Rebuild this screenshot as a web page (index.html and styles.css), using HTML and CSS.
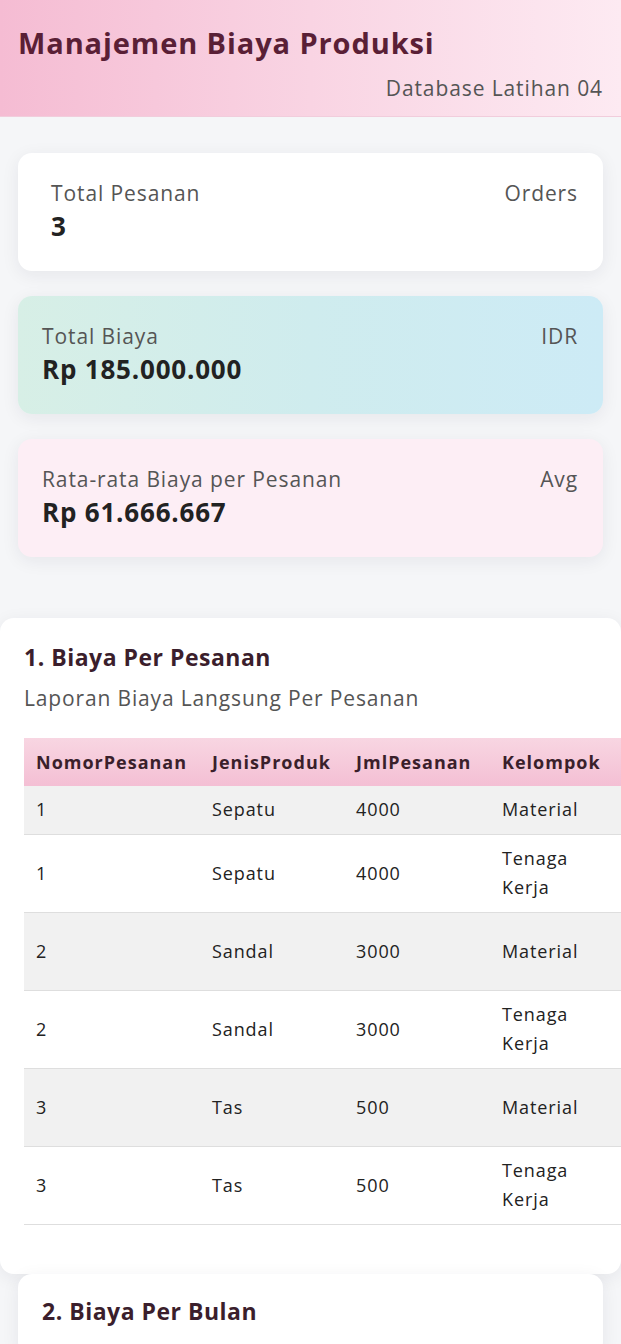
FILE: index.html
```html
<!DOCTYPE html>
<html lang="id">
<head>
<meta charset="utf-8">
<title>Manajemen Biaya Produksi</title>
<link rel="stylesheet" href="styles.css">
</head>
<body>
<header class="topbar">
  <h1 class="title">Manajemen Biaya Produksi</h1>
  <div class="db">Database Latihan 04</div>
</header>

<main class="main">
  <section class="stats">
    <div class="stat stat-white">
      <div class="stat-row"><span class="stat-label">Total Pesanan</span><span class="stat-tag">Orders</span></div>
      <div class="stat-value">3</div>
    </div>
    <div class="stat stat-mint">
      <div class="stat-row"><span class="stat-label">Total Biaya</span><span class="stat-tag">IDR</span></div>
      <div class="stat-value">Rp 185.000.000</div>
    </div>
    <div class="stat stat-pink">
      <div class="stat-row"><span class="stat-label">Rata-rata Biaya per Pesanan</span><span class="stat-tag">Avg</span></div>
      <div class="stat-value">Rp 61.666.667</div>
    </div>
  </section>

  <section class="panel panel-wide">
    <h2 class="panel-title">1. Biaya Per Pesanan</h2>
    <p class="panel-sub">Laporan Biaya Langsung Per Pesanan</p>
    <table class="grid">
      <colgroup>
        <col class="c1"><col class="c2"><col class="c3"><col class="c4"><col class="c5"><col class="c6">
      </colgroup>
      <thead>
        <tr><th>NomorPesanan</th><th>JenisProduk</th><th>JmlPesanan</th><th>Kelompok</th><th>Keterangan</th><th>Jumlah</th></tr>
      </thead>
      <tbody>
        <tr><td>1</td><td>Sepatu</td><td>4000</td><td>Material</td><td class="nw">Bahan kulit</td><td class="nw">Rp 40.000.000</td></tr>
        <tr><td>1</td><td>Sepatu</td><td>4000</td><td>Tenaga Kerja</td><td class="nw">Upah jahit</td><td class="nw">Rp 30.000.000</td></tr>
        <tr><td>2</td><td>Sandal</td><td>3000</td><td>Material</td><td class="nw">Bahan karet<br>sintetis</td><td class="nw">Rp 36.000.000</td></tr>
        <tr><td>2</td><td>Sandal</td><td>3000</td><td>Tenaga Kerja</td><td class="nw">Upah cetak</td><td class="nw">Rp 24.000.000</td></tr>
        <tr><td>3</td><td>Tas</td><td>500</td><td>Material</td><td class="nw">Bahan kanvas<br>dan resleting</td><td class="nw">Rp 35.000.000</td></tr>
        <tr><td>3</td><td>Tas</td><td>500</td><td>Tenaga Kerja</td><td class="nw">Upah jahit</td><td class="nw">Rp 20.000.000</td></tr>
      </tbody>
    </table>
  </section>

  <section class="panel panel-card">
    <h2 class="panel-title">2. Biaya Per Bulan</h2>
  </section>
</main>
</body>
</html>
```

FILE: styles.css
```css
* { box-sizing: border-box; }
html, body { margin: 0; padding: 0; }
body {
  background: #f5f6f8;
  font-family: "Open Sans", "Noto Sans", sans-serif;
  color: #222;
  overflow-x: hidden;
}
.topbar {
  height: 117px;
  padding: 24px 18px 0 18px;
  background: linear-gradient(90deg, #f5bcd3 0%, #f9d4e3 50%, #fdeaf2 100%);
  border-bottom: 1px solid #f1cddc;
}
.title {
  margin: 0;
  font-size: 29px;
  line-height: 38px;
  font-weight: 700;
  color: #5a1f36;
  letter-spacing: 0.9px;
}
.db {
  margin-top: 13px;
  text-align: right;
  font-size: 21px;
  line-height: 26px;
  letter-spacing: 0.9px;
  color: #555;
}
.main {
  padding-top: 36px;
}
.stats {
  display: flex;
  flex-direction: column;
  gap: 25px;
  padding: 0 18px;
}
.stat {
  height: 118px;
  border-radius: 14px;
  padding: 27px 25px 0 24px;
  box-shadow: 0 4px 18px rgba(30, 30, 60, 0.07);
}
.stat-white { background: #fff; padding-left: 33px; }
.stat-mint { background: linear-gradient(90deg, #d7efe6 0%, #cfecee 50%, #cdebf6 100%); }
.stat-pink { background: #fdeef5; }
.stat-row {
  display: flex;
  justify-content: space-between;
  align-items: baseline;
  font-size: 21px;
  line-height: 26px;
  letter-spacing: 0.9px;
  color: #555;
}
.stat-value {
  margin-top: 4px;
  font-size: 26px;
  line-height: 32px;
  font-weight: 700;
  letter-spacing: 0.8px;
  color: #222;
}
.panel {
  background: #fff;
  border-radius: 14px;
  box-shadow: 0 4px 18px rgba(30, 30, 60, 0.07);
}
.panel-wide {
  margin-top: 61px;
  width: 621px;
  overflow: hidden;
  padding: 24px 0 49px 24px;
}
.panel-card {
  margin: 0 18px 0 18px;
  padding: 22px 24px 30px 24px;
}
.panel-title {
  margin: 0;
  font-size: 23px;
  line-height: 30px;
  font-weight: 700;
  letter-spacing: 0.5px;
  color: #3b1e2c;
}
.panel-sub {
  margin: 13px 0 0 0;
  font-size: 21px;
  line-height: 26px;
  letter-spacing: 0.85px;
  color: #555;
}
.grid {
  margin-top: 27px;
  border-collapse: collapse;
  table-layout: fixed;
  width: 988px;
}
.c1 { width: 176px; }
.c2 { width: 144px; }
.c3 { width: 146px; }
.c4 { width: 122px; }
.c5 { width: 200px; }
.c6 { width: 200px; }
.grid th {
  text-align: left;
  font-size: 18px;
  line-height: 28px;
  font-weight: 700;
  letter-spacing: 1px;
  color: #3a1f2b;
  padding: 10px 12px;
  white-space: nowrap;
  background: linear-gradient(180deg, #f8d6e2 0%, #f4bfd4 100%);
}
.grid td {
  font-size: 18px;
  line-height: 29px;
  letter-spacing: 0.9px;
  color: #222;
  padding: 9px 12px 10px 12px;
  border-bottom: 1px solid #dedede;
  vertical-align: middle;
}
.grid td.nw { white-space: nowrap; }
.grid tbody tr:nth-child(odd) td { background: #f1f1f1; }
```
